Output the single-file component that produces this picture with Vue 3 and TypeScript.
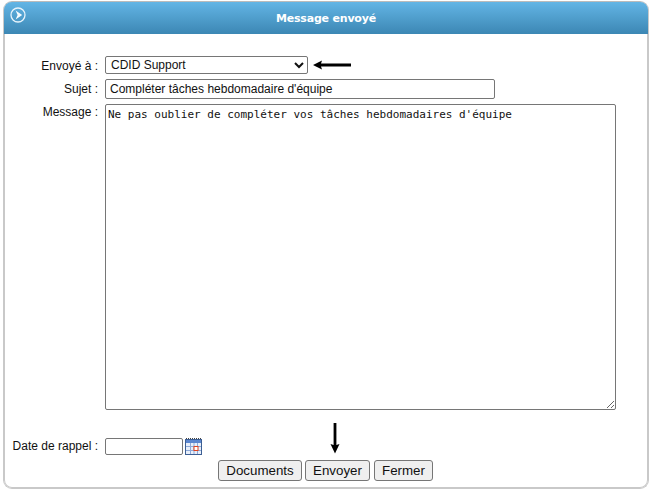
<script setup lang="ts">
const title = 'Message envoyé'
const buttons: string[] = ['Documents', 'Envoyer', 'Fermer']
</script>

<template>
  <div class="page">
    <section class="panel">
      <header class="head">
        <svg class="head-icon" width="18" height="18" viewBox="0 0 18 18">
          <circle cx="9" cy="9" r="7" fill="none" stroke="#e6f3fb" stroke-width="1.3" />
          <path d="M6.6 4.4 L13.2 9 L6.6 13.6 L8.6 9 Z" fill="#f4fafe" />
        </svg>
        <h1 class="title">{{ title }}</h1>
      </header>
      <form class="form" @submit.prevent>
        <label class="lab lab-select">Envoyé à :</label>
        <div class="row row-select">
          <select class="ctl select">
            <option>CDID Support</option>
          </select>
          <svg class="arrow-left" width="38" height="10" viewBox="0 0 38 10">
            <path d="M0 5 L9 0.5 L8 3.6 L38 3.6 L38 6.4 L8 6.4 L9 9.5 Z" fill="#000" />
          </svg>
        </div>
        <label class="lab lab-sujet">Sujet :</label>
        <input class="ctl subject" type="text" value="Compléter tâches hebdomadaire d'équipe" />
        <label class="lab lab-msg">Message :</label>
        <textarea class="ctl message" spellcheck="false">Ne pas oublier de compléter vos tâches hebdomadaires d'équipe</textarea>
        <label class="lab lab-date">Date de rappel :</label>
        <div class="row row-date">
          <input class="ctl date" type="text" />
          <svg class="cal" width="17" height="17" viewBox="0 0 17 17">
            <rect x="0.5" y="1.5" width="16" height="15" fill="#e8effa" stroke="#3d5f94" />
            <rect x="1" y="2" width="15" height="3" fill="#5b86cf" />
            <path d="M1 0.5 H16" stroke="#444" stroke-dasharray="1 1" />
            <path d="M5.5 5 V16 M9 5 V16 M12.5 5 V16 M1 8.5 H16 M1 12.5 H16" stroke="#8ea9d8" />
            <rect x="9" y="8.5" width="4" height="4" fill="#fff" stroke="#e0431f" />
          </svg>
          <svg class="arrow-down" width="10" height="31" viewBox="0 0 10 31">
            <path d="M5 30.5 L0.5 21 L3.6 22 L3.6 0 L6.4 0 L6.4 22 L9.5 21 Z" fill="#000" />
          </svg>
        </div>
        <div class="actions">
          <button v-for="b in buttons" :key="b" class="btn" :class="'btn-' + b.toLowerCase()" type="button">{{ b }}</button>
        </div>
      </form>
    </section>
  </div>
</template>

<style>
html, body { margin: 0; background: #fff; }
</style>

<style scoped>
.page {
  width: 651px;
  height: 493px;
  box-sizing: border-box;
  padding: 1px 1px 3px 3px;
  font-family: "Liberation Sans", Arial, sans-serif;
  color: #111;
}
.panel {
  width: 646px;
  height: 488px;
  box-sizing: border-box;
  border: 1px solid #c9c9c9;
  border-top-color: #bbb;
  box-shadow: inset 0 0 0 1px #c9c9c9;
  border-radius: 9px;
  background: #fff;
  overflow: hidden;
}
.head {
  height: 32px;
  display: flex;
  align-items: center;
  justify-content: center;
  position: relative;
  background: linear-gradient(#63b5e5, #3c87b4);
}
.head-icon { position: absolute; left: 5px; top: 4px; }
.title {
  margin: 0;
  font: bold 11px "DejaVu Sans", Verdana, sans-serif;
  letter-spacing: -0.2px;
  color: #fff;
}
.form {
  display: grid;
  grid-template-columns: 94px 1fr;
  column-gap: 7px;
  padding-top: 22px;
  align-items: start;
}
.lab {
  font-size: 12px;
  text-align: right;
  white-space: nowrap;
}
.lab-select { padding-top: 3px; }
.lab-sujet { padding-top: 8px; }
.lab-msg { padding-top: 6px; }
.lab-date { margin-top: 27px; padding-top: 2px; }
.row { display: flex; align-items: center; position: relative; }
.row-select { height: 18px; }
.ctl {
  box-sizing: border-box;
  border: 1px solid #767676;
  border-radius: 2px;
  background: #fff;
  color: #111;
  margin: 0;
  outline: none;
}
.select {
  width: 203px;
  height: 18px;
  font: 12px "Liberation Sans", Arial, sans-serif;
  padding: 0 0 0 1px;
}
.arrow-left { margin-left: 5px; }
.subject {
  width: 390px;
  height: 20px;
  margin-top: 5px;
  padding: 0 4px;
  font: 12px "Liberation Sans", Arial, sans-serif;
}
.message {
  display: block;
  width: 511px;
  height: 306px;
  margin-top: 5px;
  padding: 3px 2px 2px;
  font: 11px/13px "DejaVu Sans Mono", monospace;
  resize: both;
}
.row-date { margin-top: 27px; height: 18px; }
.date { width: 78px; height: 17px; padding: 0 2px; }
.cal { margin-left: 2px; }
.arrow-down { position: absolute; left: 225px; top: -14px; }
.actions {
  grid-column: 1 / -1;
  display: flex;
  margin-top: 5px;
  padding-left: 214px;
  gap: 3px;
}
.btn {
  box-sizing: border-box;
  height: 21px;
  padding: 0;
  border: 1px solid #767676;
  border-radius: 3px;
  background: #efefef;
  color: #111;
  font: 13.33px "Liberation Sans", Arial, sans-serif;
}
.btn-documents { width: 84px; }
.btn-envoyer { width: 65px; }
.btn-fermer { width: 59px; margin-left: 1px; }
</style>
